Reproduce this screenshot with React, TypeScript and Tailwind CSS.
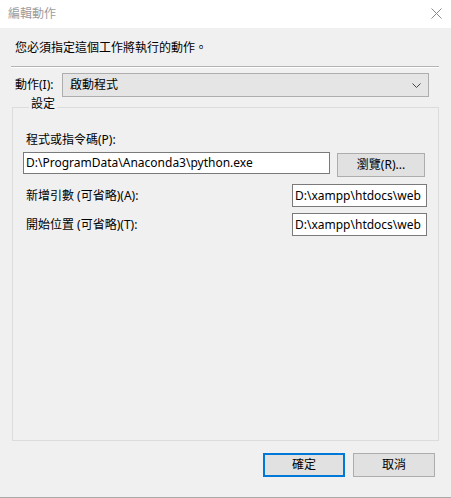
import { ReactNode } from "react";

const FONT = "font-['Noto_Sans','Noto_Sans_CJK_TC',sans-serif]";

function TextBox({ value, className }: { value: string; className: string }) {
  return (
    <div
      className={`flex items-center overflow-hidden whitespace-nowrap bg-white border border-[#7a7a7a] pl-[2px] text-[12px] text-black ${className}`}
    >
      {value}
    </div>
  );
}

function Button({
  children,
  primary,
  className,
}: {
  children: ReactNode;
  primary?: boolean;
  className: string;
}) {
  return (
    <button
      className={`flex items-center justify-center bg-[#e1e1e1] text-[12px] text-black ${
        primary ? "border-2 border-[#0078d7]" : "border border-[#adadad]"
      } ${className}`}
    >
      {children}
    </button>
  );
}

export default function App() {
  return (
    <div
      className={`w-[451px] h-[498px] flex flex-col bg-[#f0f0f0] border-b border-[#a9a9a9] ${FONT} leading-none`}
    >
      {/* Title bar */}
      <div className="h-[28px] bg-white flex items-center justify-between pl-[8px] pr-[9px]">
        <span className="text-[12px] text-[#9b9b9b]">編輯動作</span>
        <svg width="11" height="11" viewBox="0 0 11 11" className="-mt-[2px]">
          <path d="M0.5 0.5 L10.5 10.5 M10.5 0.5 L0.5 10.5" stroke="#8a8a8a" strokeWidth="1" />
        </svg>
      </div>

      <div className="flex-1 flex flex-col px-[11px]">
        <div className="h-[38px] flex items-center pl-[4px] pt-[2px] text-[12px] text-black">
          您必須指定這個工作將執行的動作。
        </div>
        <div className="w-[428px] border-t border-[#b4b4b4] border-b border-b-white" />

        {/* Action row */}
        <div className="flex items-center mt-[5px] h-[24px]">
          <span className="w-[51px] pl-[4px] text-[12px] text-black">動作(I):</span>
          <div className="w-[367px] h-[24px] flex items-center justify-between bg-[#e5e5e5] border border-[#adadad] pl-[7px] pr-[7px] text-[12px] text-black">
            <span>啟動程式</span>
            <svg width="9" height="5" viewBox="0 0 9 5">
              <path d="M0.5 0.5 L4.5 4.5 L8.5 0.5" fill="none" stroke="#444" strokeWidth="1" />
            </svg>
          </div>
        </div>

        {/* Settings group */}
        <fieldset className="w-[427px] h-[343px] mt-[1px] ml-[1px] border border-[#dcdcdc] px-[10px]">
          <legend className="ml-[6px] px-[2px] pb-[6px] text-[12px] leading-[12px] text-black">
            設定
          </legend>
          <div className="text-[12px] text-black pl-[3px] mt-[18px]">程式或指令碼(P):</div>
          <div className="flex items-start mt-[6px]">
            <TextBox value="D:\ProgramData\Anaconda3\python.exe" className="w-[307px] h-[22px]" />
            <Button className="ml-[7px] mt-[1px] w-[88px] h-[24px]">瀏覽(R)...</Button>
          </div>
          <div className="flex items-center justify-between mt-[7px] h-[23px]">
            <span className="pl-[3px] text-[12px] text-black">新增引數 (可省略)(A):</span>
            <TextBox value="D:\xampp\htdocs\web" className="w-[135px] h-[23px] mr-[1px]" />
          </div>
          <div className="flex items-center justify-between mt-[6px] h-[23px]">
            <span className="pl-[3px] text-[12px] text-black">開始位置 (可省略)(T):</span>
            <TextBox value="D:\xampp\htdocs\web" className="w-[135px] h-[23px] mr-[1px]" />
          </div>
        </fieldset>

        {/* Dialog buttons */}
        <div className="flex justify-end gap-[8px] mt-[12px] pr-[5px]">
          <Button primary className="w-[82px] h-[24px]">確定</Button>
          <Button className="w-[82px] h-[24px]">取消</Button>
        </div>
      </div>
    </div>
  );
}
